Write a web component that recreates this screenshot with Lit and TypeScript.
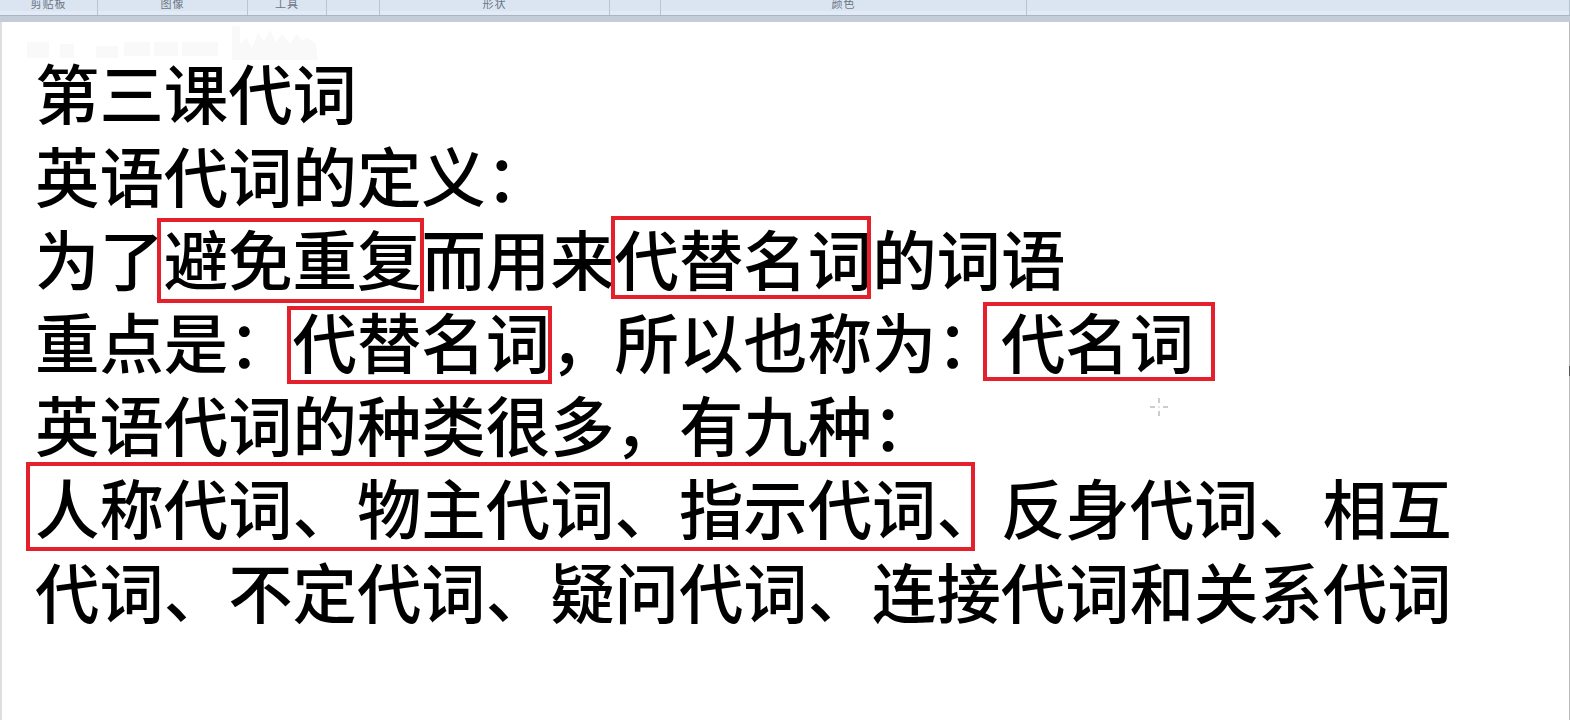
import { LitElement, html, css } from "lit";
import { customElement } from "lit/decorators.js";

@customElement("app-root")
export class AppRoot extends LitElement {
  static styles = css`
    :host { display: block; width: 1570px; height: 720px; overflow: hidden; background: #fff; position: relative;
      font-family: "Noto Sans CJK SC", sans-serif; }
    .ribbon { height: 16px; background: linear-gradient(#dbe5f1 0 11px, #e2ebf5 11px); border-bottom: 1px solid #a9b5c4; box-sizing: border-box; overflow: hidden; display: flex; }
    .grp { height: 15px; border-right: 1px solid #b9c4d2; display: flex; justify-content: center; flex: none; box-sizing: border-box; }
    .grp span { font: 11px/1 "Noto Sans CJK SC", sans-serif; color: #6a7685; margin-top: -2px; letter-spacing: 1px; }
    .band { height: 6px; background: #c3ccd9; }
    .paper { height: 698px; box-sizing: border-box; border-left: 2px solid #dedede; border-right: 1px solid #b9b9b9; padding: 28px 0 0 33px; position: relative; }
    .notch { position: absolute; right: -1px; top: 344px; width: 1px; height: 10px; background: #555; }
    .line { font: 500 64.4px/83.1px "Noto Sans CJK SC", sans-serif; color: #000; white-space: nowrap; height: 83.1px; }
    .box { position: relative; display: inline-block; height: 83.1px; vertical-align: top; }
    .box::after { content: ""; position: absolute; border: 4.5px solid #e3202c; box-sizing: border-box; top: var(--t); bottom: var(--b); left: var(--l); right: var(--r); }
    .cross { position: absolute; left: 1145px; top: 373px; }
    .wm { position: absolute; left: 22px; top: 2px; }
  `;
  render() {
    const box = (text: string, t: number, r: number, b: number, l: number) =>
      html`<span class="box" style="--t:${t}px;--r:${r}px;--b:${b}px;--l:${l}px">${text}</span>`;
    const groups: [string, number][] = [
      ["剪贴板", 98], ["图像", 150], ["工具", 79], ["", 53], ["形状", 230], ["", 51], ["颜色", 366], ["", 543],
    ];
    return html`
      <div class="ribbon">${groups.map(([n, w]) => html`<div class="grp" style="width:${w}px"><span>${n}</span></div>`)}</div>
      <div class="band"></div>
      <div class="paper">
        <svg class="wm" width="306" height="40" viewBox="0 0 306 40" fill="#f9f9f9">
          <path d="M3 18h22v16H3zM36 20h14v14H36zM72 22h22v12H72zM100 18h26v14h-26zM130 18h24v14h-24zM158 18h36v14h-36z"/>
          <path d="M208 36V2h8v18l6-6 6 10 6-16 6 10 6-12 6 12 6-8 8 10 6-10 6 6 6-2 8 6 2 16z"/>
        </svg>
        <div class="line">第三课代词</div>
        <div class="line">英语代词的定义：</div>
        <div class="line">为了${box("避免重复", 1.5, -2.4, -4.2, -6.4)}而用来${box("代替名词", 0.3, 1.4, -0.2, -3.2)}的词语</div>
        <div class="line">重点是：${box("代替名词", 7.2, -1.4, -2.1, -5.2)}，所以也称为：${box("代名词", 3.2, -20.6, 0.9, -17.6)}</div>
        <div class="line">英语代词的种类很多，有九种：</div>
        <div class="line">${box("人称代词、物主代词、指示代词、", -3, 26, -2.9, -9)}反身代词、相互</div>
        <div class="line">代词、不定代词、疑问代词、连接代词和关系代词</div>
        <svg class="cross" width="24" height="24" viewBox="0 0 24 24" stroke="#9a9a9a" stroke-width="1" fill="none"><path d="M12 3v5M12 16v5M3 12h5M16 12h5M12 11.5v1"/></svg>
        <div class="notch"></div>
      </div>`;
  }
}
